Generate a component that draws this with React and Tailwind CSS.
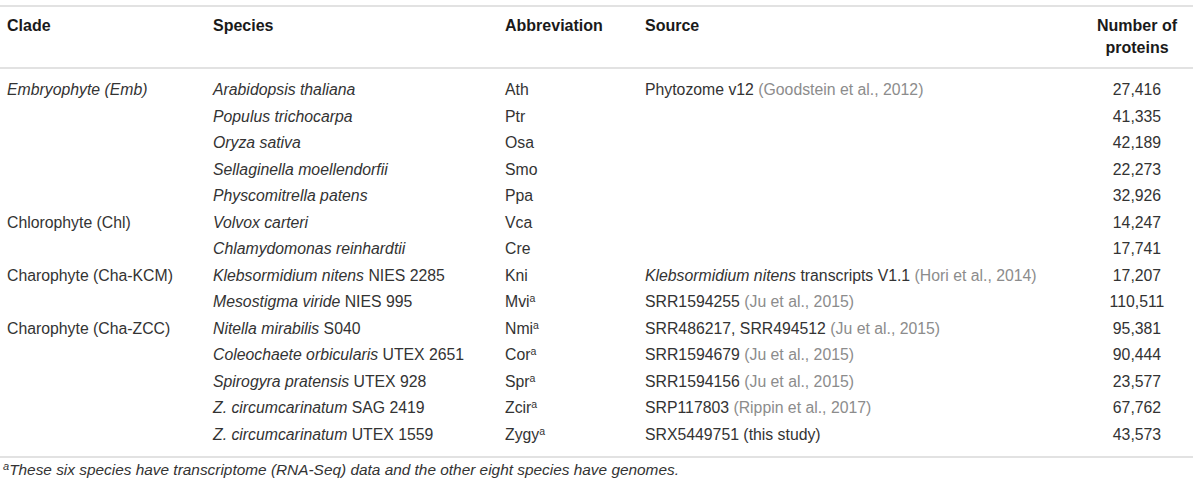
import React from "react";

const rows = [
  { clade: "Embryophyte (Emb)", cladeItalic: true, sp: "Arabidopsis thaliana", ab: "Ath", src: ["Phytozome v12", "Goodstein et al., 2012"], n: "27,416" },
  { sp: "Populus trichocarpa", ab: "Ptr", n: "41,335" },
  { sp: "Oryza sativa", ab: "Osa", n: "42,189" },
  { sp: "Sellaginella moellendorfii", ab: "Smo", n: "22,273" },
  { sp: "Physcomitrella patens", ab: "Ppa", n: "32,926" },
  { clade: "Chlorophyte (Chl)", sp: "Volvox carteri", ab: "Vca", n: "14,247" },
  { sp: "Chlamydomonas reinhardtii", ab: "Cre", n: "17,741" },
  { clade: "Charophyte (Cha-KCM)", sp: "Klebsormidium nitens", spRest: "NIES 2285", ab: "Kni", src: ["transcripts V1.1", "Hori et al., 2014"], srcItalic: "Klebsormidium nitens", n: "17,207" },
  { sp: "Mesostigma viride", spRest: "NIES 995", ab: "Mvi", sup: true, src: ["SRR1594255", "Ju et al., 2015"], n: "110,511" },
  { clade: "Charophyte (Cha-ZCC)", sp: "Nitella mirabilis", spRest: "S040", ab: "Nmi", sup: true, src: ["SRR486217, SRR494512", "Ju et al., 2015"], n: "95,381" },
  { sp: "Coleochaete orbicularis", spRest: "UTEX 2651", ab: "Cor", sup: true, src: ["SRR1594679", "Ju et al., 2015"], n: "90,444" },
  { sp: "Spirogyra pratensis", spRest: "UTEX 928", ab: "Spr", sup: true, src: ["SRR1594156", "Ju et al., 2015"], n: "23,577" },
  { sp: "Z. circumcarinatum", spRest: "SAG 2419", ab: "Zcir", sup: true, src: ["SRP117803", "Rippin et al., 2017"], n: "67,762" },
  { sp: "Z. circumcarinatum", spRest: "UTEX 1559", ab: "Zygy", sup: true, src: ["SRX5449751 (this study)"], n: "43,573" },
];

const cols = "grid grid-cols-[206px_292px_140px_1fr_112px] pl-[7px]";

const Source = ({ r }) => {
  if (!r.src) return null;
  return (
    <span>
      {r.srcItalic && <i>{r.srcItalic} </i>}
      {r.src[0]}
      {r.src[1] && <span className="text-[#8c8c8c]"> ({r.src[1]})</span>}
    </span>
  );
};

export default function App() {
  return (
    <div className="w-[1193px] bg-white pt-[5px] text-[#333] text-[15.8px] font-['Liberation_Sans',Arial,sans-serif]">
      <div className="border-t-2 border-[#e2e2e2]" />
      {/* header */}
      <div className={`${cols} pt-[8px] pb-[8px] font-bold text-[#1a1a1a] leading-[22px] text-[16px]`}>
        <div>Clade</div>
        <div>Species</div>
        <div>Abbreviation</div>
        <div>Source</div>
        <div className="text-center">
          Number of
          <br />
          proteins
        </div>
      </div>
      <div className="border-t-2 border-[#e2e2e2]" />
      {/* body */}
      <div className="pt-[8px] pb-[8px]">
        {rows.map((r, i) => (
          <div key={i} className={`${cols} h-[26.5px] items-center whitespace-nowrap`}>
            <div className={r.cladeItalic ? "italic" : ""}>{r.clade}</div>
            <div>
              <i>{r.sp}</i>
              {r.spRest && <span> {r.spRest}</span>}
            </div>
            <div>
              {r.ab}
              {r.sup && <sup className="text-[10.5px]">a</sup>}
            </div>
            <div>
              <Source r={r} />
            </div>
            <div className="text-center">{r.n}</div>
          </div>
        ))}
      </div>
      <div className="border-t-2 border-[#e2e2e2]" />
      <div className="pl-[3px] pt-[3px] italic text-[15.4px] leading-[18px] text-[#333]">
        <sup className="text-[11px]">a</sup>
        These six species have transcriptome (RNA-Seq) data and the other eight species have genomes.
      </div>
    </div>
  );
}
